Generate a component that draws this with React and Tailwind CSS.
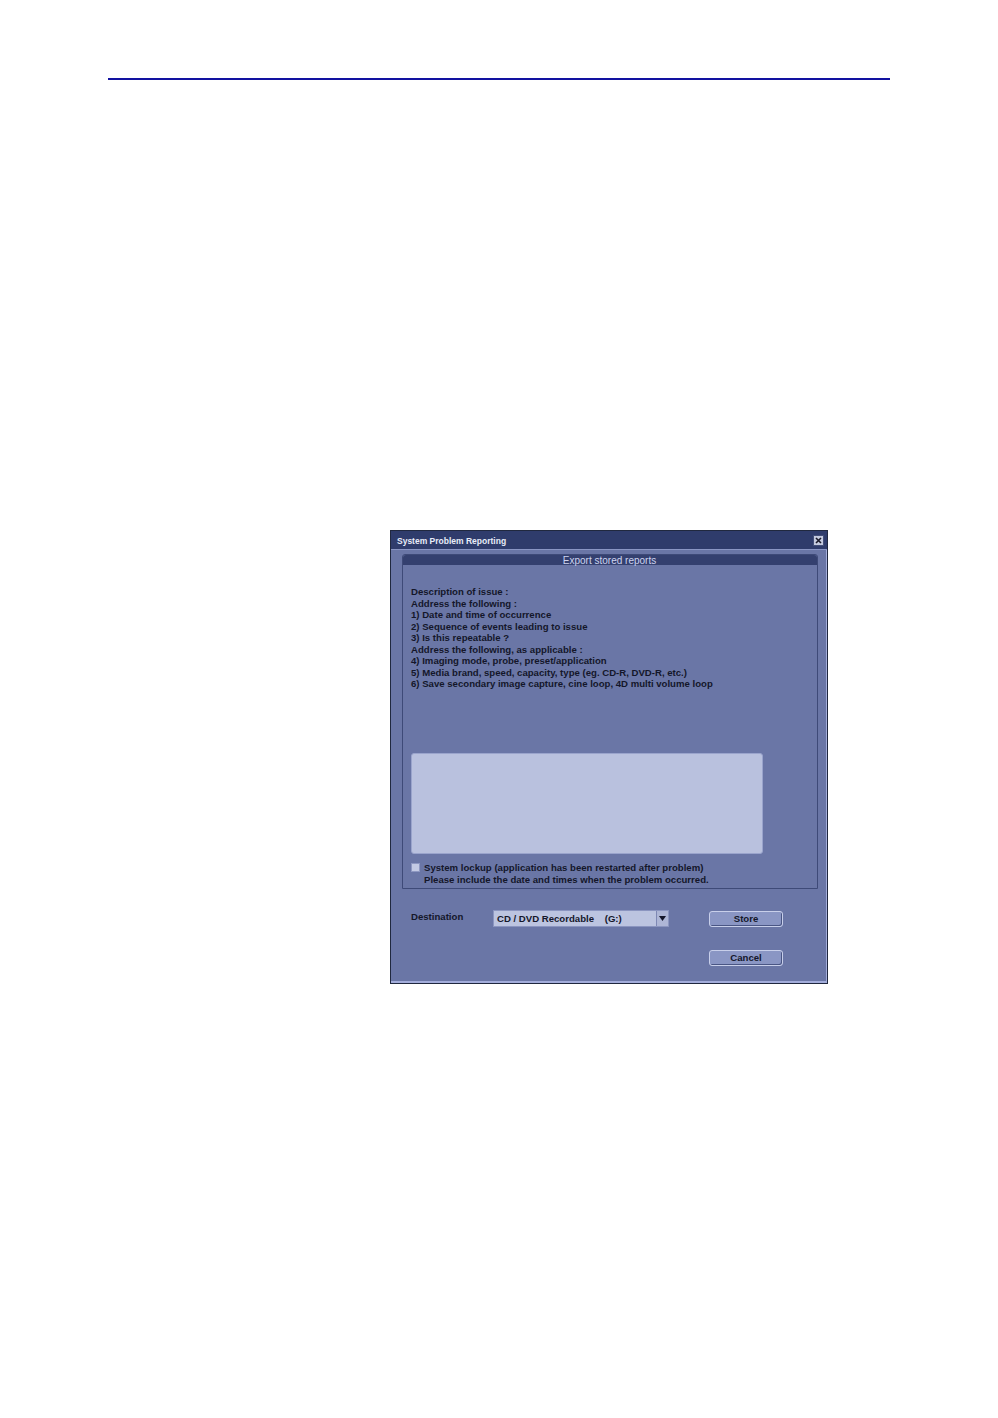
export default function App() {
  const lines = [
    "Description of issue :",
    "Address the following :",
    "1) Date and time of occurrence",
    "2) Sequence of events leading to issue",
    "3) Is this repeatable ?",
    "Address the following, as applicable :",
    "4) Imaging mode, probe, preset/application",
    "5) Media brand, speed, capacity, type (eg. CD-R, DVD-R, etc.)",
    "6) Save secondary image capture, cine loop, 4D multi volume loop",
  ];
  return (
    <div className="min-h-[1418px] w-[998px] bg-white" style={{ fontFamily: '"Liberation Sans", Arial, sans-serif' }}>
      <div className="pt-[78px] pl-[108px]">
        <div className="w-[782px] h-[2px] bg-[#1212a0]" />
      </div>
      <div className="mt-[450px] ml-[390px] w-[438px] h-[454px] border border-[#20283f] bg-[#6a76a6] flex flex-col">
        <div className="h-[19px] bg-[#2f3c6c] border-b border-[#8a96c4] flex items-center justify-between pl-[6px] pr-[3px]">
          <span className="text-[8.5px] font-bold text-[#e8ecf8] leading-none mt-[2px]">System Problem Reporting</span>
          <div className="w-[11px] h-[11px] bg-[#c5cbe0] border border-[#44507a] flex items-center justify-center">
            <svg width="7" height="7" viewBox="0 0 7 7"><path d="M1 1L6 6M6 1L1 6" stroke="#1a1a2a" strokeWidth="1.6" /></svg>
          </div>
        </div>
        <div className="flex-1 flex flex-col border-r border-[#a3addb] pl-[11px] pr-[8px] pt-[4px]">
          <div className="h-[335px] border border-[#3e4a78] rounded-t-[3px] flex flex-col">
            <div className="h-[10px] bg-[#34406f] rounded-t-[3px] flex items-center justify-center">
              <span className="text-[10px] text-[#cdd4ef] leading-none mt-[1px] ml-[-1px]">Export stored reports</span>
            </div>
            <div className="pl-[8px] pt-[21px] flex flex-col">
              {lines.map((l) => (
                <div key={l} className="text-[9.6px] font-bold text-[#14162a] leading-[11.5px] h-[11.5px] whitespace-nowrap">{l}</div>
              ))}
            </div>
            <div className="ml-[8px] mt-[63px] w-[352px] h-[101px] bg-[#b9c1de] rounded-[3px] border border-[#9aa4cc]" />
            <div className="ml-[8px] mt-[8px] flex">
              <div className="w-[9px] h-[9px] bg-[#c3cae4] border border-[#8e98c2] mt-[1px]" />
              <div className="ml-[4px] flex flex-col">
                <span className="text-[9.6px] font-bold text-[#14162a] leading-[12px] whitespace-nowrap">System lockup (application has been restarted after problem)</span>
                <span className="text-[9.6px] font-bold text-[#14162a] leading-[12px] whitespace-nowrap">Please include the date and times when the problem occurred.</span>
              </div>
            </div>
          </div>
          <div className="mt-[21px] flex items-center">
            <span className="ml-[9px] w-[82px] text-[9.6px] font-bold text-[#14162a] leading-none mt-[-3px]">Destination</span>
            <div className="w-[176px] h-[17px] bg-[#bcc4e0] border border-[#8b95c0] flex items-center">
              <span className="flex-1 pl-[3px] text-[9.6px] font-bold text-[#14162a] whitespace-pre leading-none">CD / DVD Recordable    (G:)</span>
              <div className="w-[12px] h-[15px] bg-[#aeb6d6] border-l border-[#7e88b4] flex items-center justify-center">
                <svg width="7" height="5" viewBox="0 0 7 5"><path d="M0 0H7L3.5 5Z" fill="#14162a" /></svg>
              </div>
            </div>
            <div className="ml-[40px] w-[74px] h-[16px] bg-[#8a96c4] border border-[#c8cfea] rounded-[3px] shadow-[inset_-1px_-1px_0_#4a5684] flex items-center justify-center">
              <span className="text-[9.6px] font-bold text-[#14162a] leading-none">Store</span>
            </div>
          </div>
          <div className="mt-[23px] flex">
            <div className="ml-[307px] w-[74px] h-[16px] bg-[#8a96c4] border border-[#c8cfea] rounded-[3px] shadow-[inset_-1px_-1px_0_#4a5684] flex items-center justify-center">
              <span className="text-[9.6px] font-bold text-[#14162a] leading-none">Cancel</span>
            </div>
          </div>
        </div>
        <div className="h-[2px] bg-[#a3addb]" />
      </div>
    </div>
  );
}
